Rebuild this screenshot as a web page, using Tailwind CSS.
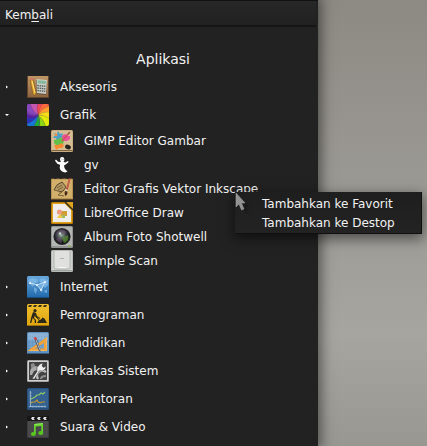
<!DOCTYPE html>
<html lang="id">
<head>
<meta charset="utf-8">
<meta name="viewport" content="width=device-width, initial-scale=1">
<title>Aplikasi</title>
<script src="https://cdn.jsdelivr.net/npm/@tailwindcss/browser@4"></script>
</head>
<body class="relative min-h-screen overflow-x-hidden bg-linear-to-b from-[#8d8a84] via-[#a6a5a0] via-75% to-[#999792] font-['DejaVu_Sans',sans-serif] text-xs text-[#f2f2f2]">
<main class="min-h-screen w-[74.5%] border-t border-[#111] bg-[#222] shadow-[0_0_12px_3px_rgba(0,0,0,0.5)]">
  <nav class="mr-0.5 h-[26px] border-b-2 border-[#151515] bg-linear-to-b from-[#272727] to-[#212121] px-[5px]">
    <button type="button" class="h-6 pt-1">Kem<span class="underline underline-offset-2">b</span>ali</button>
  </nav>
  <h1 class="mt-[22px] h-6 pl-2 text-center text-[14px] leading-5">Aplikasi</h1>
  <ul>
    <li><button type="button" aria-expanded="false" class="flex h-7 w-full items-center text-left">
      <svg class="ml-1 mr-[15px] h-2 w-2" viewBox="0 0 8 8"><path d="M2 2.5v3l2-1.5z" fill="#fff"/></svg>
      <svg class="mr-[11px] h-[22px] w-[22px] shrink-0" viewBox="0 0 22 22"><defs><linearGradient id="wood" x2="0" y2="1"><stop stop-color="#c09565"/><stop offset="1" stop-color="#8b633d"/></linearGradient></defs><rect width="22" height="22" rx="1.5" fill="url(#wood)"/><path d="M.5 1v20M21.5 1v20M1 21.5h20" stroke="#5f442b"/><path d="M9 4l11 1-1 14-9-1z" fill="#66513a"/><path d="M9.5 3l10.5 1-1 14-9-1z" fill="#c9cdc5"/><path d="M10.8 4.2l8 .8-.2 3-8-.8z" fill="#84b99b"/><path d="M10.3 9.5l8 .8M10.3 12l8 .8M10.3 14.5l8 .8" stroke="#555e60" stroke-width="1.4" stroke-dasharray="1.6 .7"/><path d="M3 4l3-1 3 14-1 3-2-2z" fill="#e4a52c" stroke="#76501f" stroke-width=".6"/><path d="M5 5l3 12" stroke="#ffe078"/><path d="M3 2l3-.4.3 2.3-2.8.5z" fill="#d37766"/></svg>Aksesoris</button></li>
    <li>
      <button type="button" aria-expanded="true" class="flex h-7 w-full items-center text-left">
      <svg class="ml-[3px] mr-4 h-2 w-2" viewBox="0 0 8 8"><path d="M2 3h4l-2 2z" fill="#fff"/></svg>
      <svg class="mr-[11px] h-[22px] w-[22px] shrink-0" viewBox="0 0 22 22"><defs><clipPath id="wheel"><rect width="22" height="22" rx="2"/></clipPath></defs><g clip-path="url(#wheel)"><rect width="22" height="22" fill="#7a3fae"/><path d="M11 11Q9 5 11-1h5Q13 5 11 11" fill="#f0485e"/><path d="M11 11Q12 4 16-1h7v3Q15 5 11 11" fill="#fb6a3c"/><path d="M11 11Q15 4 23 2v6Q16 8 11 11" fill="#ffa030"/><path d="M11 11q6-4 12-3v7q-7-4-12-4" fill="#f6dc1c"/><path d="M11 11q7 0 12 4v8h-4q-3-8-8-12" fill="#e2ea08"/><path d="M11 11q6 5 8 12h-7q2-6-1-12" fill="#8fd614"/><path d="M11 11q3 6 1 12H6q4-5 5-12" fill="#20a83a"/><path d="M11 11Q10 18 6 23h-7v-3q8-2 12-9" fill="#1478d8"/><path d="M11 11q-4 7-12 9v-6q7 1 12-3" fill="#2a34b8"/><path d="M11 11Q6 15-1 14V9q6 4 12 2" fill="#5a20a4"/><path d="M11 11Q4 11-1 7v-8h4q2 8 8 12" fill="#8748bd"/><path d="M11 11Q5 7 3-1h8Q9 5 11 11" fill="#c457b0"/><path d="M11 11Q9 5 11-1M11 11Q12 4 16-1M11 11Q15 4 23 2M11 11q6-4 12-3M11 11q7 0 12 4M11 11q6 5 8 12M11 11q3 6 1 12M11 11Q10 18 6 23M11 11q-4 7-12 9M11 11Q6 15-1 14M11 11Q4 11-1 7M11 11Q5 7 3-1" fill="none" stroke="#39223c" stroke-opacity=".35" stroke-width=".5"/></g></svg>Grafik</button>
      <ul>
        <li><button type="button" class="flex h-6 w-full items-center pl-[51px] text-left"><svg class="mr-[11px] h-[22px] w-[22px] shrink-0" viewBox="0 0 22 22"><rect width="22" height="22" rx="1.5" fill="#c8ad82"/><rect x="1" y="1" width="20" height="19" fill="#d6bd93"/><path d="M.5 20.5h21" stroke="#806342"/><path d="M7 1l2 3 3-1-1 3 2 2-4 1-3 2-1-3-3 0 2-3-1-2 3 1z" fill="#4c9fc9"/><path d="M12 5l2-1 3 2 2 0 0 3-3 2-4 0-3-2z" fill="#e8559b"/><path d="M3 10l4-1 4-2 2 4-1 3-4 2-3-1-2-2z" fill="#62c04a"/><path d="M3 15l4 0 4-2 2 3-2 2-3 0-3 2-1-3z" fill="#f58a30"/><path d="M11 11l7-8" stroke="#da4a64" stroke-width="1.7"/><path d="M17 4l2-2" stroke="#8e6339" stroke-width="1.5"/><circle cx="5" cy="5" r="1.3" fill="#fa8c31"/><ellipse cx="17" cy="17" rx="3" ry="2.3" transform="rotate(25 17 17)" fill="#28251f"/></svg>GIMP Editor Gambar</button></li>
        <li><button type="button" class="flex h-6 w-full items-center pl-[51px] text-left"><svg class="mr-[11px] h-[22px] w-[22px] shrink-0" viewBox="0 0 22 22"><path d="M11 3q2.4 0 2.4 2.4 0 1.600-1 2.400l1.800.7 2.800-1.500.7 1-3 2.600-1.500.6q-.4 2.200.8 3.800l2.500 2.500-2.200.9q-4.800-.6-5.600-4.400l.4-3.200-2.500-.7-2.600-3.400.9-1.200 2.300 2.300 2 .2.800-.6q-1-.8-1-2 0-2.400 2-2.400" fill="#fff"/><path d="M10.500 5.500h.7M12 5.500h.5" stroke="#555" stroke-width=".6"/></svg>gv</button></li>
        <li><button type="button" class="flex h-6 w-full items-center pl-[51px] text-left"><svg class="mr-[11px] h-[22px] w-[22px] shrink-0" viewBox="0 0 22 22"><path d="M0 1l2-.5 2 .5 3-.5 3 .5 3-.5 4 .5 3-.5 2 .5v20l-2 .5-3-.5-3 .5-4-.5-3 .5-4-.5-3 .5z" fill="#b8924f"/><path d="M1 1.500h20v18.500H1z" fill="#d2b06c"/><path d="M3 12q2-6 8-8l4 5-3 4-4 1" fill="#b79a63" stroke="#57432b"/><path d="M3 12l8 2-4 3 6 1M6 10l5-3M7 12l5-3" fill="none" stroke="#65502f" stroke-width=".8"/><path d="M18 0l1.600.3-3 12-1.700-.4z" fill="#ae3932"/><path d="M18.600 1l-2.200 9" stroke="#ed9a79" stroke-width=".5"/><path d="M14.700 11l2 .5-.4 2-1.900-.4z" fill="#d8d4c5"/><path d="M14.200 13l2 .5q1 2-1.500 4.500-2-2-.5-5" fill="#4a281a"/><path d="M0 21.500h22" stroke="#60482a"/></svg>Editor Grafis Vektor Inkscape</button></li>
        <li><button type="button" class="flex h-6 w-full items-center pl-[51px] text-left"><svg class="mr-[11px] h-[22px] w-[22px] shrink-0" viewBox="0 0 22 22"><rect width="22" height="22" rx="1.5" fill="#bf7d09"/><rect x="1" y="1" width="20" height="20" fill="#dda119"/><path d="M2 2H14l6 6v12H2z" fill="#efeeec"/><path d="M15 0h7v8z" fill="#dba321"/><path d="M14 0l8 8" stroke="#342b16" stroke-width="1.4"/><rect x="10" y="9" width="6" height="5" fill="#cf9e34"/><circle cx="8.500" cy="10" r="2.600" fill="#ec9b81"/><path d="M6 16l3-4 3 4z" fill="#efc541"/><path d="M11 13h3v3h-3z" fill="#9ebd68"/></svg>LibreOffice Draw</button></li>
        <li><button type="button" class="flex h-6 w-full items-center pl-[51px] text-left"><svg class="mr-[11px] h-[22px] w-[22px] shrink-0" viewBox="0 0 22 22"><defs><radialGradient id="lens" cx=".45" cy=".4"><stop stop-color="#b4c7b8"/><stop offset=".25" stop-color="#6b8375"/><stop offset=".7" stop-color="#3b3346"/><stop offset="1" stop-color="#151719"/></radialGradient></defs><rect width="22" height="22" rx="1.5" fill="#929593"/><rect x="1" y="1" width="20" height="19" fill="#b4b6b4"/><circle cx="11" cy="10.5" r="8.600" fill="#272928"/><circle cx="11" cy="10.5" r="7.600" fill="url(#lens)"/><path d="M5 7q5-6 11-1l-5 3zM5 13l5-2 1 6q-4 0-6-4" fill="#6d5572" opacity=".5"/><path d="M11 12l6-3q2 6-4 8z" fill="#5a942f" opacity=".7"/><circle cx="9" cy="7.500" r="1.2" fill="#ccd3cb"/><path d="M17 20h3" stroke="#87bc40"/></svg>Album Foto Shotwell</button></li>
        <li><button type="button" class="flex h-6 w-full items-center pl-[51px] text-left"><svg class="mr-[11px] h-[22px] w-[22px] shrink-0" viewBox="0 0 22 22"><rect width="22" height="22" rx="1.5" fill="#b8bab6"/><rect x="1" y="1" width="20" height="20" fill="#cfd1ce"/><rect x="3" y="1" width="16" height="18" rx="1" fill="#e0e1df"/><path d="M3 1v17l2 1h12l2-1V1" fill="none" stroke="#a6aaa5" stroke-width=".8"/><path d="M9 8.5h4" stroke="#b1b3af"/><path d="M7 17.5h8" stroke="#f6f6f6"/><path d="M1 20.5h20" stroke="#9da29c"/></svg>Simple Scan</button></li>
      </ul>
    </li>
    <li><button type="button" aria-expanded="false" class="flex h-7 w-full items-center text-left"><svg class="ml-1 mr-[15px] h-2 w-2" viewBox="0 0 8 8"><path d="M2 2.5v3l2-1.5z" fill="#fff"/></svg><svg class="mr-[11px] h-[22px] w-[22px] shrink-0" viewBox="0 0 22 22"><defs><linearGradient id="net" x2="0" y2="1"><stop stop-color="#67a7dc"/><stop offset="1" stop-color="#1f68ab"/></linearGradient></defs><rect width="22" height="22" rx="1.5" fill="url(#net)"/><path d="M1 4l4-2 5 1 1 3-4 2-1 3-3-3zM7 11l3 2-1 5-2-3zM12 4l3-2 6 2v5l-3 3-2-2-1 7-2-4-2-3 3-3zM18 14h2v3l-3-1z" fill="#8fc4ee" opacity=".6"/><path d="M3 7l7 2 8-3-4 8-4-5" fill="none" stroke="#d5edff" stroke-width=".8"/><g fill="#fff"><circle cx="3" cy="7" r=".9"/><circle cx="10" cy="9" r=".9"/><circle cx="18" cy="6" r=".9"/><circle cx="14" cy="14" r=".9"/></g><path d="M1 21.5h20" stroke="#164c80"/></svg>Internet</button></li>
    <li><button type="button" aria-expanded="false" class="flex h-7 w-full items-center text-left"><svg class="ml-1 mr-[15px] h-2 w-2" viewBox="0 0 8 8"><path d="M2 2.5v3l2-1.5z" fill="#fff"/></svg><svg class="mr-[11px] h-[22px] w-[22px] shrink-0" viewBox="0 0 22 22"><defs><linearGradient id="work" x2="0" y2="1"><stop stop-color="#efbf30"/><stop offset="1" stop-color="#e0a50d"/></linearGradient></defs><rect width="22" height="22" rx="1.5" fill="url(#work)"/><path d="M2 1h3L4 3H1zM7 1h3L9 3H6zM12 1h3l-1 2h-3zM17 1h3l-1 2h-3z" fill="#42361a"/><circle cx="8" cy="6.7" r="1.6" fill="#2c2818"/><path d="M6 8l3 1 1 3 3 2-.5 1-3.5-2-1-2-1 3 2 2v3H7.700v-3L5.600 14 4.300 19H3l1.300-6z" fill="#2c2818"/><path d="M6 10l6 6" stroke="#2c2818" stroke-width=".8"/><path d="M10 19l2-3 2-.5 1.500-2 2 1 2.500 4.500z" fill="#2c2818"/><path d="M1 21.5h20" stroke="#9c7207"/></svg>Pemrograman</button></li>
    <li><button type="button" aria-expanded="false" class="flex h-7 w-full items-center text-left"><svg class="ml-1 mr-[15px] h-2 w-2" viewBox="0 0 8 8"><path d="M2 2.5v3l2-1.5z" fill="#fff"/></svg><svg class="mr-[11px] h-[22px] w-[22px] shrink-0" viewBox="0 0 22 22"><rect width="22" height="22" rx="1.5" fill="#5e91c0"/><path d="M1 1h20v7H1z" fill="#82acd1"/><path d="M1 3h20M1 6h20M1 9h20M1 12h20M1 15h20M4 1v19M7 1v19M10 1v19M13 1v19M16 1v19" stroke="#a5c7e3" stroke-width=".4"/><path d="M20 5v14H0zM17 11l-9 5.500h9z" fill="#efa33a" fill-rule="evenodd"/><path d="M19.500 6v12.500H3" fill="none" stroke="#ffc36e" stroke-width=".6"/><path d="M7.500 7l2.200-.5 3.500 10.500.2 3-1.800-2z" fill="#3c4554"/><path d="M9 8l4 10" stroke="#d9dfe4" stroke-width=".8"/><path d="M6.5 5.500l2.600-.5 1 2.500-2.300.5z" fill="#d24545"/><path d="M1 21.5h20" stroke="#375f85"/></svg>Pendidikan</button></li>
    <li><button type="button" aria-expanded="false" class="flex h-7 w-full items-center text-left"><svg class="ml-1 mr-[15px] h-2 w-2" viewBox="0 0 8 8"><path d="M2 2.5v3l2-1.5z" fill="#fff"/></svg><svg class="mr-[11px] h-[22px] w-[22px] shrink-0" viewBox="0 0 22 22"><rect width="22" height="22" rx="1.5" fill="#a5a5a5"/><rect x="1.500" y="1.500" width="19" height="19" fill="#424242" stroke="#cfcfcf"/><path d="M3 11q1-4 5-5l4 1-1 3-4 1-2 4H3z" fill="#a9a9a9"/><path d="M4 4l3-1 1 3-4 2z" fill="#8e8e8e"/><path d="M11 19q-3-5 2-8 3-1 6 1" fill="none" stroke="#c2c2c2" stroke-width="2.400"/><path d="M14 19q0-3 5-3" fill="none" stroke="#8d8d8d" stroke-width="2"/><path d="M5 19l5-7.500 0-4L13 4l3-1-1 3 1.500 1.500L19 6l-.5 3-3 2-3-.2L7.500 19z" fill="#ededed" stroke="#333" stroke-width=".5"/></svg>Perkakas Sistem</button></li>
    <li><button type="button" aria-expanded="false" class="flex h-7 w-full items-center text-left"><svg class="ml-1 mr-[15px] h-2 w-2" viewBox="0 0 8 8"><path d="M2 2.5v3l2-1.5z" fill="#fff"/></svg><svg class="mr-[11px] h-[22px] w-[22px] shrink-0" viewBox="0 0 22 22"><rect width="22" height="22" rx="1.5" fill="#294f7b"/><rect x="1" y="1" width="20" height="19" fill="#34618f"/><path d="M3.500 3v16M2 18.500h17" stroke="#a7bfd5" stroke-width=".8"/><path d="M2 5h3M2 8h3M2 11h3M2 14h3M6 17v3M9 17v3M12 17v3M15 17v3M18 17v3" stroke="#92afc8" stroke-width=".5"/><path d="M4 11l2-1 2-1 2-2 2 0 2-2 2 1 2-2" fill="none" stroke="#91cc65" stroke-width="1.1"/><path d="M4 15l2-1 2 0 2-2 1 2 2 1 2-1 3 0" fill="none" stroke="#c5942d" stroke-width="1.1"/></svg>Perkantoran</button></li>
    <li><button type="button" aria-expanded="false" class="flex h-7 w-full items-center text-left"><svg class="ml-1 mr-[15px] h-2 w-2" viewBox="0 0 8 8"><path d="M2 2.5v3l2-1.5z" fill="#fff"/></svg><svg class="mr-[11px] h-[22px] w-[22px] shrink-0" viewBox="0 0 22 22"><rect width="22" height="22" rx="1.5" fill="#3c3c3c"/><rect x="1" y="5" width="20" height="16" fill="#494949"/><path d="M0 0h22v5H0z" fill="#171717"/><path d="M5 1h3L6.500 2.500 8 4H5.500L4 2.500zM11 1h3l-1.500 1.500L14 4h-2.500L10 2.500zM17 1h3l-1.500 1.500L20 4h-2.500L16 2.500z" fill="#e8e8e8"/><path d="M7 8l9-1v10h-1.700V10L8.700 10.600V18H7z" fill="#66d52e"/><ellipse cx="6.400" cy="18" rx="2.500" ry="2" fill="#55c71f"/><ellipse cx="13.800" cy="17" rx="2.500" ry="2" fill="#55c71f"/><path d="M7.500 8.500l8-1" stroke="#a1f078" stroke-width=".7"/></svg>Suara &amp; Video</button></li>
  </ul>
</main>
<div role="menu" class="absolute left-[235px] top-48 flex h-[42px] w-[187px] flex-col border-r border-b border-[#101010] bg-linear-to-b from-[#1e1e1e] to-[#232323] pt-0.5 shadow-[0_4px_12px_1px_rgba(0,0,0,0.5)]">
  <button type="button" role="menuitem" class="h-[19px] pl-[27px] text-left whitespace-nowrap">Tambahkan ke Favorit</button>
  <button type="button" role="menuitem" class="h-[19px] pl-[27px] text-left whitespace-nowrap">Tambahkan ke Destop</button>
  <svg class="absolute left-0 top-0 h-6 w-5" viewBox="0 0 20 24"><path d="M5 6l10 9h-4l3 6-3 1-3-6-3 3z" fill="#171717" opacity=".6"/><path d="M1 1v14l3-3 2.500 6 2.500-1-2.500-6H10z" fill="#929292" stroke="#a5a5a5" stroke-width=".5"/></svg>
</div>
</body>
</html>
